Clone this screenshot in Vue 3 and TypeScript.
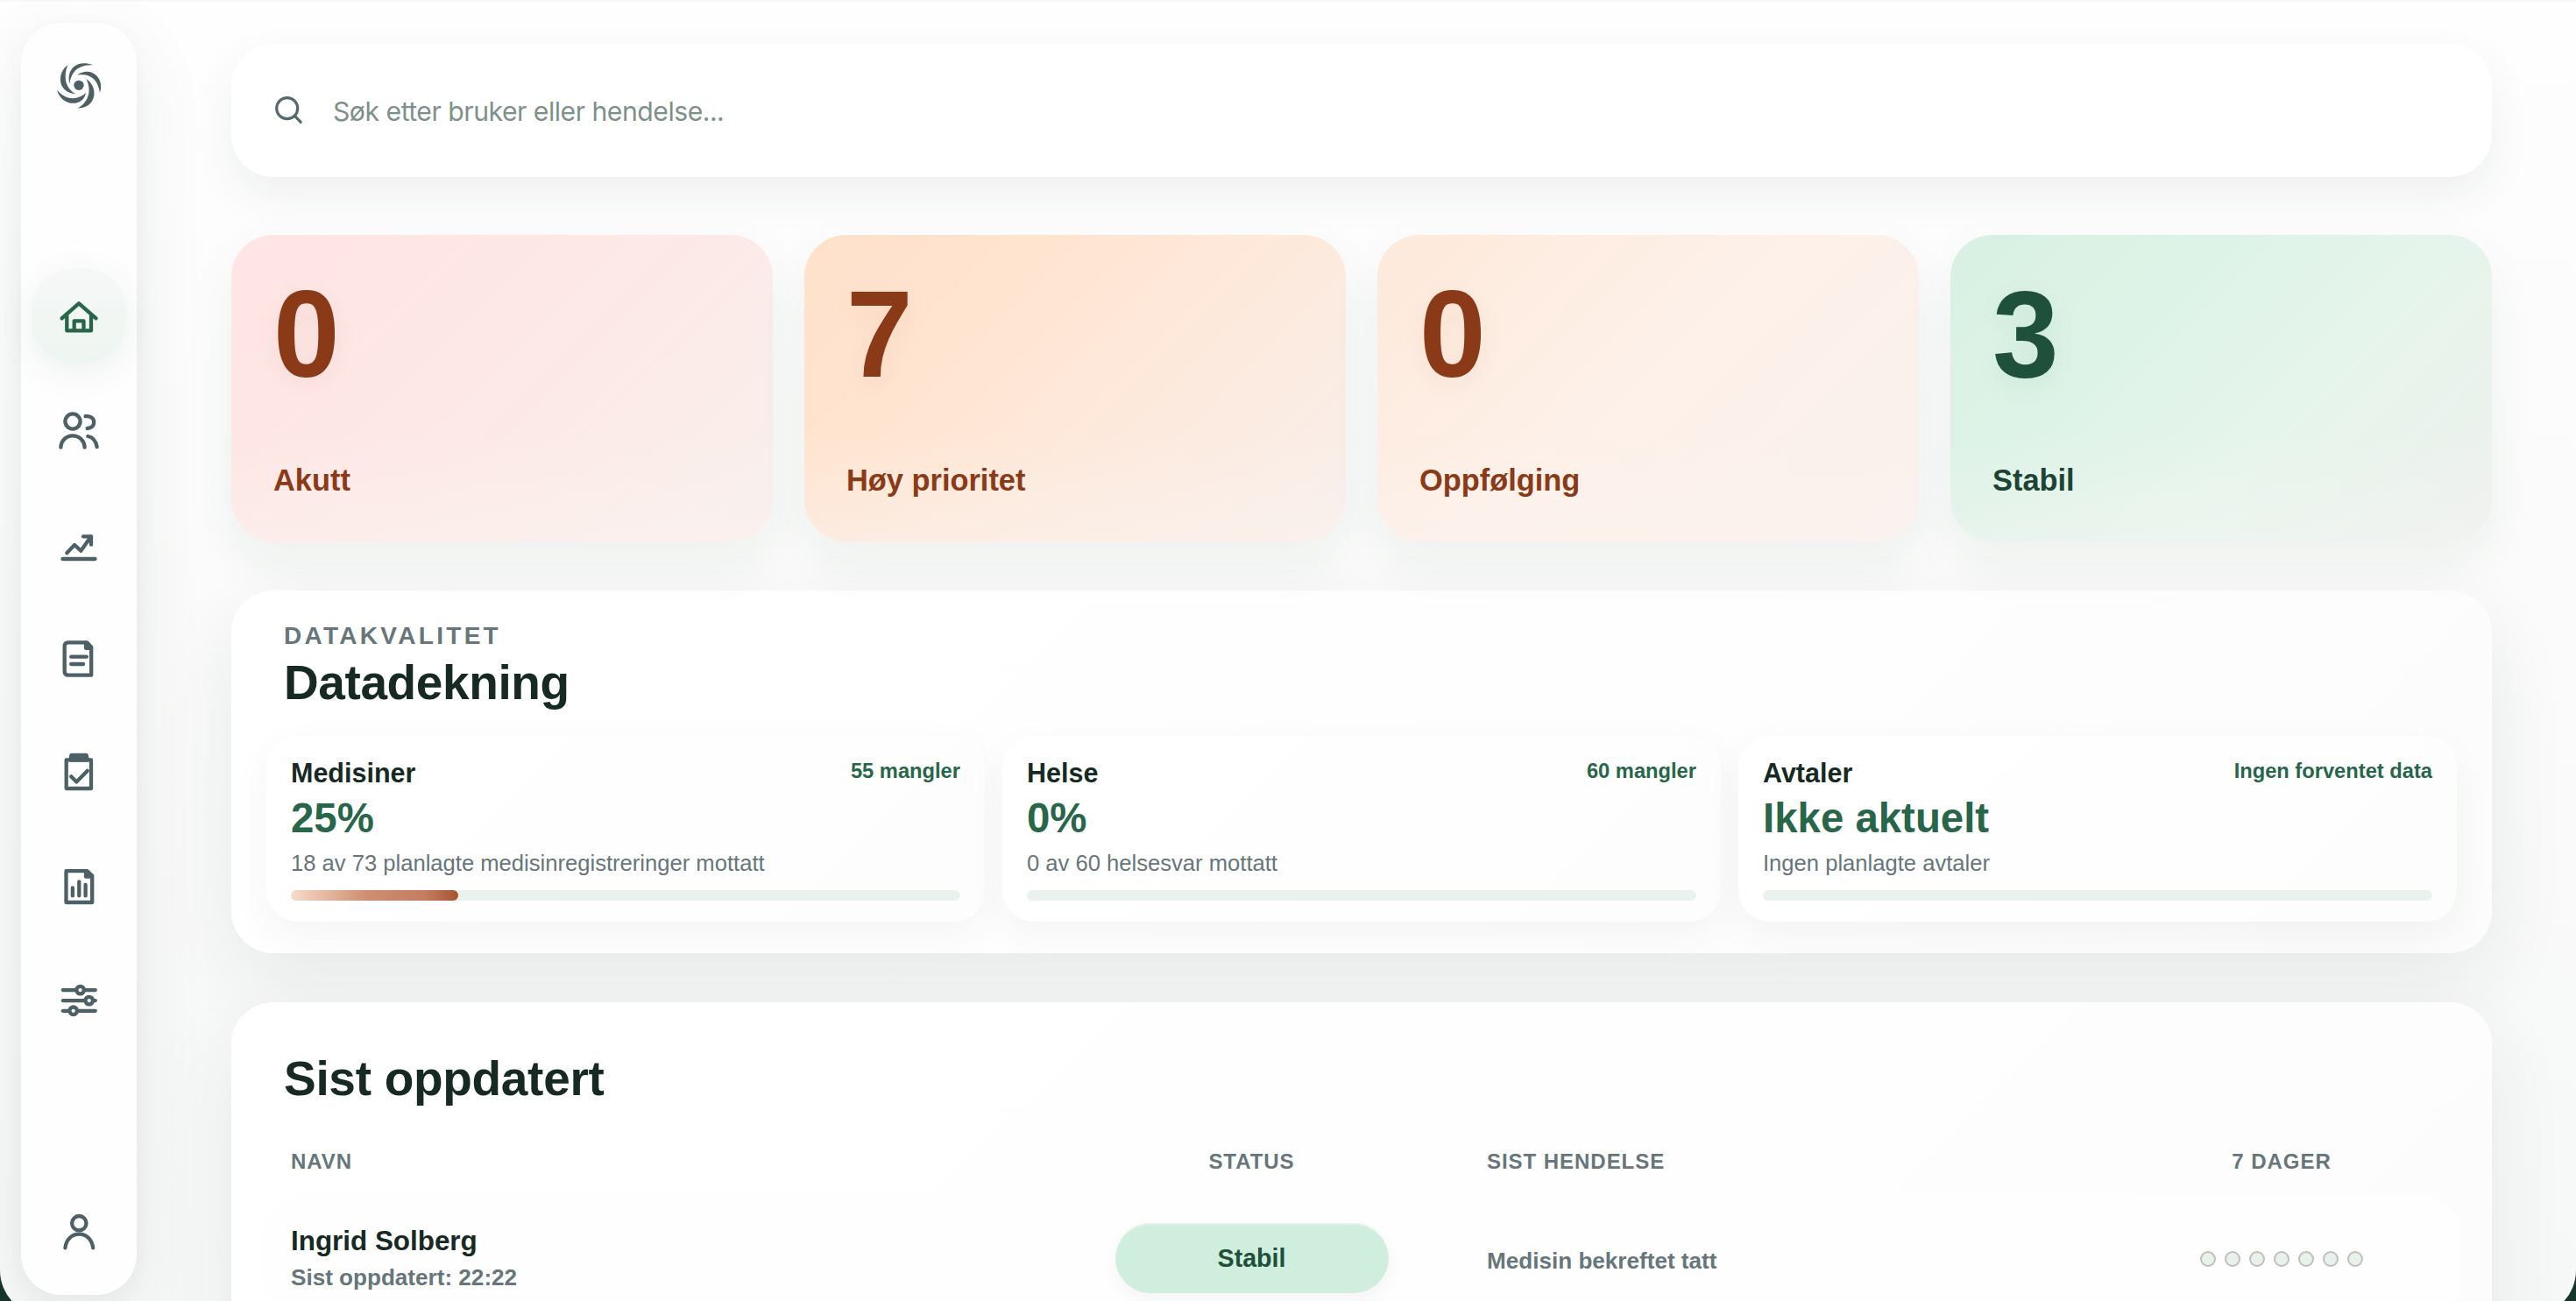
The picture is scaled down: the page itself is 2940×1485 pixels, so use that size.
<script setup lang="ts">
interface Stat {
  value: number
  label: string
  tone: string
}
interface Coverage {
  name: string
  badge: string
  value: string
  detail: string
  percent: number
}

const stats: Stat[] = [
  { value: 0, label: 'Akutt', tone: 'acute' },
  { value: 7, label: 'Høy prioritet', tone: 'high' },
  { value: 0, label: 'Oppfølging', tone: 'follow' },
  { value: 3, label: 'Stabil', tone: 'stable' },
]

const coverage: Coverage[] = [
  { name: 'Medisiner', badge: '55 mangler', value: '25%', detail: '18 av 73 planlagte medisinregistreringer mottatt', percent: 25 },
  { name: 'Helse', badge: '60 mangler', value: '0%', detail: '0 av 60 helsesvar mottatt', percent: 0 },
  { name: 'Avtaler', badge: 'Ingen forventet data', value: 'Ikke aktuelt', detail: 'Ingen planlagte avtaler', percent: 0 },
]

const columns: string[] = ['Navn', 'Status', 'Sist hendelse', '7 dager']
const rows = [
  { name: 'Ingrid Solberg', updated: 'Sist oppdatert: 22:22', status: 'Stabil', event: 'Medisin bekreftet tatt', days: 7 },
]
</script>

<template>
  <div class="screen">
    <div class="app">
      <aside class="sidebar">
        <svg class="logo" viewBox="192 213 156 162">
          <path d="M318 222 C262 203 226 238 238 287 C246 243 266 223 318 222Z" />
          <path d="M232 223 C194 250 196 318 260 322 C228 306 214 268 232 223Z" />
          <path d="M195 308 C212 368 286 366 294 318 C266 344 226 344 195 308Z" />
          <path d="M295 270 C340 300 330 370 266 371 C302 350 316 312 295 270Z" />
          <path d="M265 257 C306 226 360 262 342 318 C336 274 310 249 265 257Z" />
          <circle cx="270" cy="292" r="17" />
        </svg>
        <nav class="nav">
          <a class="item active">
            <svg class="icon" viewBox="0 0 48 48">
              <path d="M4.6 27.3 24 10.3l19.6 17M10.3 24v17.4H38V24M18.7 41V30.3h10.8V41" />
            </svg>
          </a>
          <a class="item">
            <svg class="icon" viewBox="0 0 48 48">
              <circle cx="17" cy="15" r="8.6" />
              <path d="M3.4 44.7a13.6 13.4 0 0 1 27.2 0M31.6 9.2c5.4-.8 9.6 2.3 9.6 6.8 0 4-2.9 6.6-7.5 7M34.4 32c5.6 1 9.2 6 10.2 12.2" />
            </svg>
          </a>
          <a class="item">
            <svg class="icon" viewBox="0 0 48 48">
              <path d="M10.3 35.3 19 26l7.3 6.7L38 16.3M29 16.3h9v9.4M5.5 42h37" />
            </svg>
          </a>
          <a class="item">
            <svg class="icon" viewBox="0 0 48 48">
              <path d="M12 7.3h21.2l5 5.5v31.9H12q-4.3 0-4.3-4.3V11.6q0-4.3 4.3-4.3zM15.2 23.7h17.6M15.2 32h13.9" />
              <path class="solid" d="M32 7.8v6h6z" />
            </svg>
          </a>
          <a class="item">
            <svg class="icon" viewBox="0 0 48 48">
              <path d="M9.7 11.3H38V44H9.7zM15.2 30.3l6.1 6.2 12.3-12.6" />
              <path class="solid" d="M15.4 6h17.2l1.2 5.6H14.2z" />
            </svg>
          </a>
          <a class="item">
            <svg class="icon" viewBox="0 0 48 48">
              <path d="M9.5 8.2h24l5.7 5.3V44H9.5zM16.9 27.4v9M24.3 20.4v16M31.6 24v12.4" />
              <path class="solid" d="M32 8.7v6h6.6z" />
            </svg>
          </a>
          <a class="item">
            <svg class="icon" viewBox="0 0 48 48">
              <path d="M5.8 14.1h37M5.8 26.1h37M5.8 37.8h37" />
              <circle class="knob" cx="25.6" cy="14.1" r="4.3" />
              <circle class="knob" cx="35.7" cy="26.1" r="4.3" />
              <circle class="knob" cx="17.7" cy="37.8" r="4.3" />
            </svg>
          </a>
        </nav>
        <a class="item account">
          <svg class="icon" viewBox="0 0 48 48">
            <circle cx="24.3" cy="12.2" r="8.2" />
            <path d="M8.4 40.3C9.5 31 15.8 24.6 24.3 24.6S39 31 40.2 40.3" />
          </svg>
        </a>
      </aside>

      <main class="main">
        <div class="search">
          <svg class="search-icon" viewBox="0 0 36 36">
            <circle cx="15.7" cy="15.7" r="12" />
            <path d="m24.4 24.4 6.8 6.9" />
          </svg>
          <span>Søk etter bruker eller hendelse...</span>
        </div>

        <section class="stats">
          <article v-for="s in stats" :key="s.label" class="stat" :class="s.tone">
            <div class="number">{{ s.value }}</div>
            <div class="label">{{ s.label }}</div>
          </article>
        </section>

        <section class="panel quality">
          <div class="eyebrow">DATAKVALITET</div>
          <h2>Datadekning</h2>
          <div class="cards">
            <article v-for="c in coverage" :key="c.name" class="card">
              <div class="head">
                <strong>{{ c.name }}</strong>
                <span>{{ c.badge }}</span>
              </div>
              <div class="value">{{ c.value }}</div>
              <div class="detail">{{ c.detail }}</div>
              <div class="track">
                <div v-if="c.percent" class="fill" :style="{ width: c.percent + '%' }"></div>
              </div>
            </article>
          </div>
        </section>

        <section class="panel recent">
          <h2>Sist oppdatert</h2>
          <div class="grid table-head">
            <span v-for="c in columns" :key="c">{{ c }}</span>
          </div>
          <div v-for="r in rows" :key="r.name" class="grid row">
            <div>
              <div class="name">{{ r.name }}</div>
              <div class="updated">{{ r.updated }}</div>
            </div>
            <div class="pill">{{ r.status }}</div>
            <div class="event">{{ r.event }}</div>
            <div class="days"><i v-for="d in r.days" :key="d"></i></div>
          </div>
        </section>
      </main>
    </div>
  </div>
</template>

<style>
html,
body {
  margin: 0;
  overflow: hidden;
}
</style>

<style scoped>
.screen {
  width: 2940px;
  height: 1485px;
  overflow: hidden;
  background: linear-gradient(180deg, #fafafa 50%, #16352a 50%);
}
/* The window's rounded bottom edge runs just past the visible area. */
.app {
  box-sizing: border-box;
  display: flex;
  align-items: flex-start;
  height: 1502px;
  padding: 24px 0 0 24px;
  overflow: hidden;
  border-top: 2px solid #f8f8f8;
  border-radius: 0 0 52px 52px;
  background: linear-gradient(180deg, #fefefe 0%, #fafbfa 45%, #f6f8f7 100%);
  font-family: "Liberation Sans", Arial, sans-serif;
  color: #162a23;
}
.sidebar {
  box-sizing: border-box;
  display: flex;
  flex-direction: column;
  align-items: center;
  flex: none;
  width: 132px;
  height: 1452px;
  padding: 45px 0 16px;
  border-radius: 46px;
  background: #fefefe;
  box-shadow: 0 24px 90px rgba(30, 60, 48, 0.07), 0 8px 28px rgba(30, 60, 48, 0.04);
}
.logo {
  width: 52px;
  height: 54px;
  fill: #4c6066;
}
.nav {
  display: flex;
  flex-direction: column;
  gap: 22px;
  margin-top: 181px;
}
.item {
  display: flex;
  align-items: center;
  justify-content: center;
  width: 108px;
  height: 108px;
  border-radius: 48px;
  color: #4c6066;
}
.item.active {
  color: #28664a;
  background: linear-gradient(180deg, #f6f8f7, #edf5f0);
  box-shadow: 0 10px 40px rgba(30, 60, 48, 0.08);
}
.account {
  margin-top: auto;
}
.icon {
  width: 48px;
  height: 48px;
  fill: none;
  stroke: currentColor;
  stroke-width: 4.3;
  stroke-linecap: round;
  stroke-linejoin: round;
}
.icon .solid {
  fill: currentColor;
}
.icon .knob {
  fill: #fefefe;
}
.main {
  flex: none;
  width: 2580px;
  margin: 24px 0 0 108px;
}
.search {
  display: flex;
  align-items: center;
  box-sizing: border-box;
  height: 152px;
  padding: 0 48px;
  border-radius: 48px;
  background: #fff;
  box-shadow: 0 20px 50px rgba(30, 60, 48, 0.065);
  font-family: Inter, sans-serif;
  font-size: 30.2px;
  letter-spacing: -0.5px;
  color: #7e9189;
}
.search span {
  padding-top: 1px;
}
.search-icon {
  width: 36px;
  height: 36px;
  margin: 0 32px 0 0;
  fill: none;
  stroke: #56696e;
  stroke-width: 3.2;
  stroke-linecap: round;
}
.stats {
  display: grid;
  grid-template-columns: repeat(4, 1fr);
  gap: 36px;
  margin-top: 66px;
}
.stat {
  box-sizing: border-box;
  height: 350px;
  padding: 47px 48px 0;
  border-radius: 48px;
  color: #8b3a17;
  box-shadow: 0 24px 60px rgba(30, 60, 48, 0.06), 0 -2px 0 rgba(255, 255, 255, 0.8);
}
.acute {
  background: linear-gradient(180deg, transparent 65%, rgba(250, 243, 239, 0.45)), linear-gradient(135deg, #ffe4e2 0%, #fde9e7 50%, #f8efec 100%);
}
.high {
  background: linear-gradient(180deg, transparent 65%, rgba(250, 243, 239, 0.45)), linear-gradient(135deg, #ffe1cb 0%, #ffe4d0 30%, #fee9db 55%, #f8efeb 100%);
}
.follow {
  background: linear-gradient(180deg, transparent 65%, rgba(250, 243, 239, 0.45)), linear-gradient(135deg, #fee9da 0%, #fdf0e8 45%, #f9f1ed 100%);
}
.stable {
  color: #1f503b;
  background: linear-gradient(180deg, transparent 65%, rgba(244, 245, 242, 0.45)), linear-gradient(135deg, #d8f1e3 0%, #def3e7 35%, #e6f5ec 60%, #eef0ed 100%);
}
.number {
  font-size: 136px;
  font-weight: 700;
  line-height: 136px;
  text-shadow: 0 8px 28px rgba(139, 58, 23, 0.06);
  transform: scaleY(1.035);
  transform-origin: 0 115px;
}
.stable .number {
  text-shadow: 0 8px 28px rgba(31, 110, 75, 0.08);
}
.label {
  margin-top: 77px;
  font-size: 34.4px;
  font-weight: 700;
  line-height: 40px;
}
.stable .label {
  color: #1c4434;
}
.panel {
  box-sizing: border-box;
  margin-top: 56px;
  border-radius: 48px;
  background: linear-gradient(135deg, #fff 0%, #fefefe 60%, #fbfcfb 100%);
  box-shadow: 0 32px 90px rgba(30, 60, 48, 0.075);
}
h2 {
  margin: 0;
  font-size: 55px;
  font-weight: 700;
  line-height: 60px;
  letter-spacing: -0.4px;
}
.quality {
  height: 414px;
  padding: 36px 40px;
}
.eyebrow {
  padding-left: 20px;
  font-size: 28px;
  font-weight: 700;
  line-height: 32px;
  letter-spacing: 3.3px;
  color: #66767a;
}
.quality h2 {
  margin-top: 7px;
  padding-left: 20px;
}
.cards {
  display: grid;
  grid-template-columns: repeat(3, 1fr);
  gap: 20px;
  margin-top: 31px;
}
.card {
  box-sizing: border-box;
  height: 212px;
  padding: 23.5px 28px 0;
  border-radius: 36px;
  background: linear-gradient(135deg, #fff, #fefefe 60%, #fcfdfc);
  box-shadow: 0 16px 44px rgba(30, 60, 48, 0.05);
}
.head {
  display: flex;
  align-items: flex-start;
  justify-content: space-between;
}
.head strong {
  font-size: 30.5px;
  line-height: 36px;
}
.head span {
  margin-top: 2.5px;
  font-size: 23.7px;
  font-weight: 700;
  line-height: 28px;
  color: #28664a;
}
.value {
  margin-top: 8.5px;
  font-size: 47.4px;
  font-weight: 700;
  line-height: 52px;
  color: #28664a;
}
.detail {
  margin-top: 9px;
  font-size: 25.6px;
  line-height: 32px;
  color: #66767a;
}
.track {
  height: 12px;
  margin-top: 15px;
  overflow: hidden;
  border-radius: 6px;
  background: #e9f2ec;
}
.fill {
  height: 100%;
  border-radius: 6px;
  background: linear-gradient(90deg, #f6dccb 0%, #cf8e72 45%, #c47d60 80%, #a9532f 100%);
}
.recent {
  height: 500px;
  padding: 57px 36px 0;
}
.recent h2 {
  padding-left: 24px;
  letter-spacing: -0.3px;
}
.grid {
  display: grid;
  grid-template-columns: 828px 457px 695px 344px;
  column-gap: 40px;
  align-items: center;
  padding: 0 32px;
}
.table-head {
  margin-top: 50.5px;
  font-size: 24px;
  font-weight: 700;
  line-height: 28px;
  letter-spacing: 0.96px;
  text-transform: uppercase;
  color: #66767a;
}
.table-head span:nth-child(even) {
  text-align: center;
}
.row {
  height: 144px;
  margin-top: 24.5px;
  border-radius: 44px;
  background: #fefefe;
}
.name {
  margin-top: -1px;
  font-size: 31.4px;
  font-weight: 700;
  line-height: 38px;
}
.updated {
  margin-top: 6px;
  font-size: 26.1px;
  font-weight: 700;
  line-height: 32px;
  color: #66767a;
}
.pill {
  justify-self: center;
  width: 312px;
  height: 80px;
  border-radius: 40px;
  background: #d0eedd;
  box-shadow: 0 8px 20px rgba(30, 60, 48, 0.05), inset 0 2px 0 #e6f1ea;
  font-size: 28.6px;
  font-weight: 700;
  line-height: 80px;
  text-align: center;
  color: #1f503b;
}
.event {
  padding-top: 7px;
  font-size: 26.1px;
  font-weight: 700;
  color: #66767a;
}
.days {
  display: flex;
  justify-content: center;
  gap: 10px;
  padding-top: 2px;
}
.days i {
  box-sizing: border-box;
  width: 18px;
  height: 18px;
  border: 2px solid #bfc0ba;
  border-radius: 50%;
  background: #e6f2ea;
}
</style>
